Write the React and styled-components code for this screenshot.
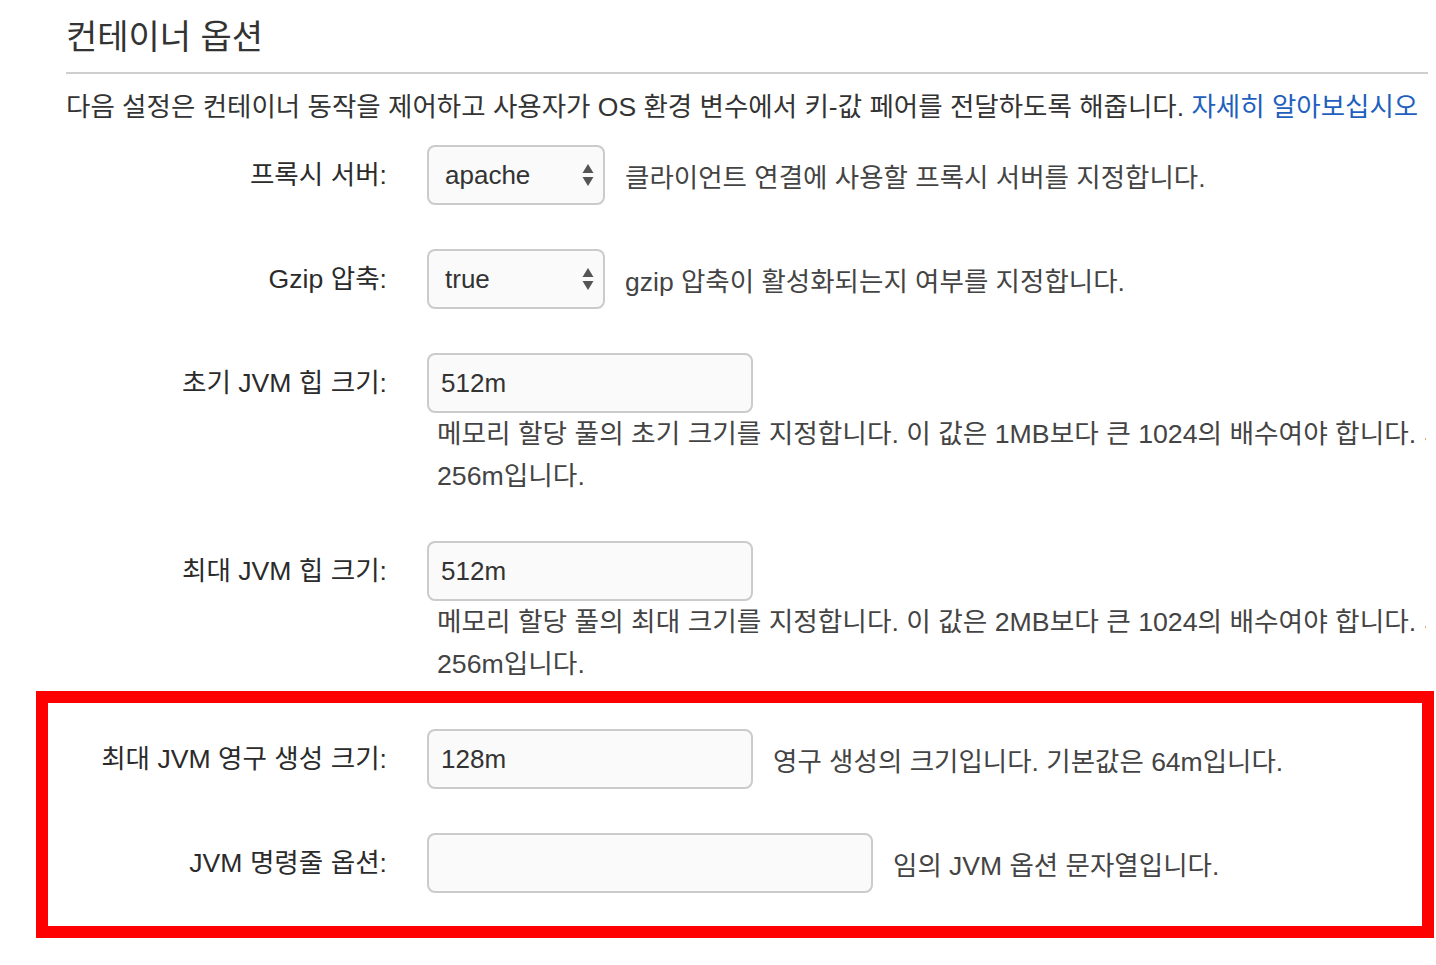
import React from "react";
import styled, { createGlobalStyle } from "styled-components";

const GlobalStyle = createGlobalStyle`
  html, body {
    margin: 0;
    padding: 0;
    background: #fff;
    overflow-x: hidden;
  }
  body {
    font-family: "Liberation Sans", "Noto Sans CJK KR", sans-serif;
    color: #333;
  }
`;

const rows = [
  { label: "프록시 서버:", kind: "select", value: "apache", help: "클라이언트 연결에 사용할 프록시 서버를 지정합니다." },
  { label: "Gzip 압축:", kind: "select", value: "true", help: "gzip 압축이 활성화되는지 여부를 지정합니다." },
  {
    label: "초기 JVM 힙 크기:",
    kind: "input",
    value: "512m",
    below: ["메모리 할당 풀의 초기 크기를 지정합니다. 이 값은 1MB보다 큰 1024의 배수여야 합니다. 기본값은", "256m입니다."],
  },
  {
    label: "최대 JVM 힙 크기:",
    kind: "input",
    value: "512m",
    below: ["메모리 할당 풀의 최대 크기를 지정합니다. 이 값은 2MB보다 큰 1024의 배수여야 합니다. 기본값은", "256m입니다."],
  },
];

const marked = [
  { label: "최대 JVM 영구 생성 크기:", kind: "input", value: "128m", help: "영구 생성의 크기입니다. 기본값은 64m입니다." },
  { label: "JVM 명령줄 옵션:", kind: "input", value: "", wide: true, help: "임의 JVM 옵션 문자열입니다." },
];

const Arrows = () => (
  <ArrowIcon width="14" height="26" viewBox="0 0 14 26">
    <path d="M7 2 L12.5 11 L1.5 11 Z" fill="#555" />
    <path d="M7 24 L12.5 15 L1.5 15 Z" fill="#555" />
  </ArrowIcon>
);

const Control = ({ row }) => {
  if (row.kind === "select") {
    return (
      <SelectWrap>
        <Select defaultValue={row.value}>
          <option>{row.value}</option>
        </Select>
        <Arrows />
      </SelectWrap>
    );
  }
  return <TextInput defaultValue={row.value} $wide={row.wide} />;
};

const FormRow = ({ row }) => (
  <Row>
    <Label>{row.label}</Label>
    <Field>
      <Inline>
        <Control row={row} />
        {row.help && <Help>{row.help}</Help>}
      </Inline>
      {row.below && (
        <Below>
          {row.below.map((line) => (
            <BelowLine key={line}>{line}</BelowLine>
          ))}
        </Below>
      )}
    </Field>
  </Row>
);

const App = () => {
  return (
    <>
      <GlobalStyle />
      <Page>
        <Title>컨테이너 옵션</Title>
        <Intro>
          다음 설정은 컨테이너 동작을 제어하고 사용자가 OS 환경 변수에서 키-값 페어를 전달하도록 해줍니다.{" "}
          <LearnMore href="#">자세히 알아보십시오</LearnMore>
        </Intro>
        <Form>
          {rows.map((row) => (
            <FormRow key={row.label} row={row} />
          ))}
          <Highlight>
            {marked.map((row) => (
              <FormRow key={row.label} row={row} />
            ))}
          </Highlight>
        </Form>
      </Page>
    </>
  );
};

export default App;

const Page = styled.div`
  width: 1362px;
  padding: 17px 0 40px 66px;
`;

const Title = styled.h2`
  margin: 0;
  font-size: 34px;
  line-height: 40px;
  font-weight: 400;
  color: #333;
  padding-bottom: 15px;
  border-bottom: 2px solid #cfcfcf;
`;

const Intro = styled.p`
  margin: 15px 0 0;
  font-size: 26.5px;
  line-height: 36px;
  color: #333;
  white-space: nowrap;
`;

const LearnMore = styled.a`
  color: #1f5fbd;
  text-decoration: none;
`;

const Form = styled.div`
  display: flex;
  flex-direction: column;
  gap: 44px;
  margin-top: 20px;
`;

const Row = styled.div`
  display: grid;
  grid-template-columns: 321px 1fr;
  column-gap: 40px;
  align-items: start;
`;

const Label = styled.div`
  text-align: right;
  font-size: 26.6px;
  line-height: 60px;
  color: #2b2b2b;
  white-space: nowrap;
`;

const Field = styled.div`
  display: flex;
  flex-direction: column;
  min-width: 0;
`;

const Inline = styled.div`
  display: flex;
  align-items: center;
  gap: 20px;
`;

const Help = styled.span`
  font-size: 26.5px;
  color: #444;
  white-space: nowrap;
`;

const Below = styled.div`
  padding-left: 10px;
  max-width: 989px;
  overflow: hidden;
`;

const BelowLine = styled.div`
  font-size: 26.7px;
  line-height: 42px;
  color: #444;
  white-space: nowrap;
`;

const controlBase = `
  box-sizing: border-box;
  height: 60px;
  border: 2px solid #cbcbcb;
  border-radius: 8px;
  background: #fafafa;
  font-family: "Liberation Sans", "Noto Sans CJK KR", sans-serif;
  font-size: 26px;
  color: #333;
  outline: none;
  margin: 0;
`;

const SelectWrap = styled.div`
  position: relative;
  width: 178px;
  flex: none;
`;

const Select = styled.select`
  ${controlBase}
  width: 100%;
  padding: 0 40px 0 16px;
  appearance: none;
  -webkit-appearance: none;
`;

const ArrowIcon = styled.svg`
  position: absolute;
  right: 10px;
  top: 17px;
  pointer-events: none;
`;

const TextInput = styled.input`
  ${controlBase}
  width: ${(p) => (p.$wide ? "446px" : "326px")};
  padding: 0 12px;
  flex: none;
`;

const Highlight = styled.div`
  display: flex;
  flex-direction: column;
  gap: 44px;
  margin: -38px -6px 0 -30px;
  padding: 26px 0 33px 18px;
  border: 12px solid #ff0000;
`;
